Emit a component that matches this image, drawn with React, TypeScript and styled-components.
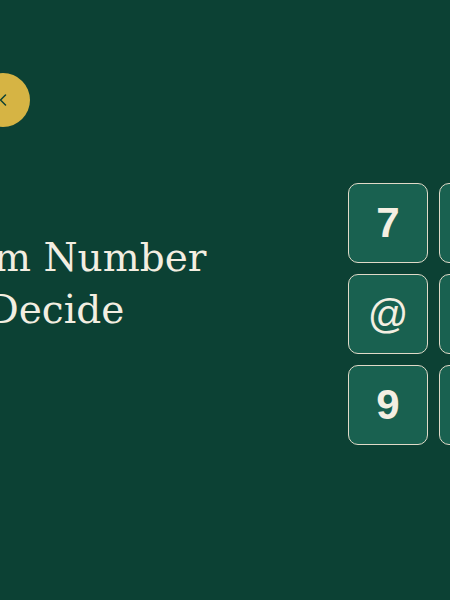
import React from "react";
import styled, { createGlobalStyle } from "styled-components";
import { ChevronLeft } from "lucide-react";

const GlobalStyle = createGlobalStyle`
  html, body {
    margin: 0;
    padding: 0;
    background: #0c4134;
    overflow: hidden;
  }
`;

const Page = styled.div`
  width: 100vw;
  height: 100vh;
  display: flex;
  justify-content: center;
  background: #0c4134;
  overflow: hidden;
`;

const Frame = styled.div`
  flex-shrink: 0;
  width: 960px;
  display: flex;
  flex-direction: column;
`;

const TopBar = styled.header`
  display: flex;
  align-items: center;
  padding: 73px 0 0 231px;
`;

const BackButton = styled.button`
  width: 54px;
  height: 54px;
  border-radius: 50%;
  border: 0;
  padding: 0;
  background: #d6b444;
  color: #0c4134;
  display: flex;
  align-items: center;
  justify-content: center;
  cursor: pointer;
`;

const Hero = styled.main`
  display: flex;
  align-items: flex-start;
  justify-content: space-between;
  margin-top: 56px;
  padding: 0 95px 0 122px;
`;

const Title = styled.h1`
  margin: 49px 0 0;
  font-family: "DejaVu Serif", "Liberation Serif", serif;
  font-weight: 400;
  font-size: 39px;
  line-height: 52px;
  color: #f3eee1;
`;

const Grid = styled.div`
  display: grid;
  grid-template-columns: repeat(3, 80px);
  grid-auto-rows: 80px;
  gap: 11px;
`;

const Tile = styled.div<{ $symbol?: boolean }>`
  display: flex;
  align-items: center;
  justify-content: center;
  background: #196150;
  border: 1px solid #e0dac8;
  border-radius: 10px;
  font-family: "Liberation Sans", Arial, sans-serif;
  font-size: ${(p) => (p.$symbol ? "40px" : "42px")};
  font-weight: ${(p) => (p.$symbol ? 400 : 700)};
  color: #f4efe2;
`;

const tiles = ["7", "3", "5", "@", "#", "&", "9", "1", "2"];

export default function App() {
  return (
    <>
      <GlobalStyle />
      <Page>
        <Frame>
          <TopBar>
            <BackButton aria-label="Back">
              <ChevronLeft size={20} strokeWidth={1.8} />
            </BackButton>
          </TopBar>
          <Hero>
            <Title>
              Random Number
              <br />
              Let It Decide
            </Title>
            <Grid>
              {tiles.map((t, i) => (
                <Tile key={i} $symbol={!/\d/.test(t)}>
                  {t}
                </Tile>
              ))}
            </Grid>
          </Hero>
        </Frame>
      </Page>
    </>
  );
}
